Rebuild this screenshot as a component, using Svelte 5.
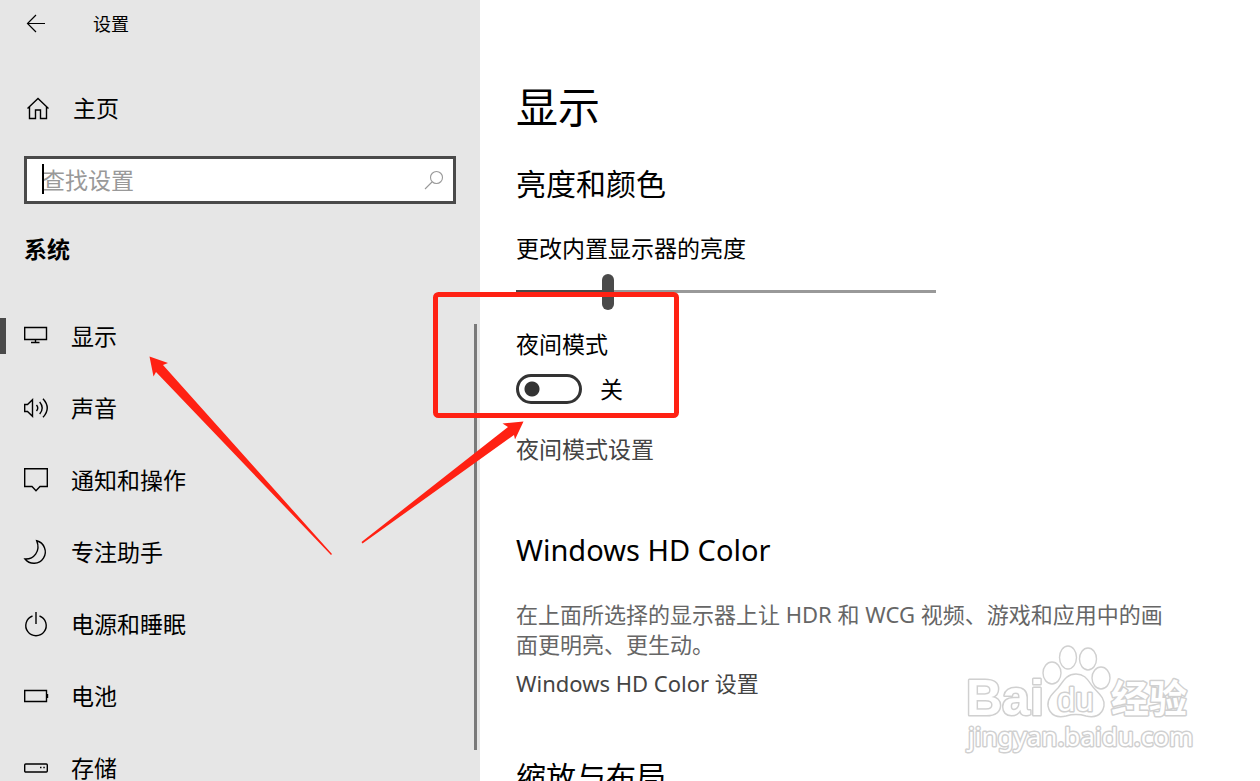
<script>
    let brightness = 21;
    let nightMode = false;
    let query = '';
    let current = 'display';

    const items = [
        { id: 'display', label: '显示' },
        { id: 'sound', label: '声音' },
        { id: 'notifications', label: '通知和操作' },
        { id: 'focus', label: '专注助手' },
        { id: 'power', label: '电源和睡眠' },
        { id: 'battery', label: '电池' },
        { id: 'storage', label: '存储' }
    ];
</script>

<div class="window">
    <aside class="sidebar">
        <header class="titlebar">
            <button class="back" type="button" aria-label="返回">
                <svg class="icon thin" viewBox="0 0 24 24">
                    <path d="M21 11.5H3.5M12 3L3.5 11.5L12 20" />
                </svg>
            </button>
            <span>设置</span>
        </header>

        <a class="home" href="#home">
            <svg class="icon" viewBox="0 0 24 24">
                <path d="M3.5 12.5L14 2.5L24.5 12.5M5.5 11V22.5H11.5V14H16.5V22.5H22.5V11" />
            </svg>
            <span>主页</span>
        </a>

        <div class="search">
            <input type="text" placeholder="查找设置" aria-label="查找设置" bind:value={query}>
            <svg class="icon search-icon" viewBox="0 0 24 24">
                <circle cx="15.5" cy="9.5" r="6" />
                <path d="M11 14L4 21" />
            </svg>
        </div>

        <h2 class="group">系统</h2>

        <nav>
            <ul>
                {#each items as item}
                    <li>
                        <a href="#{item.id}" class:active={current === item.id} on:click={() => (current = item.id)}>
                            <svg class="icon" viewBox="0 0 24 24">
                                {#if item.id === 'display'}
                                    <path d="M.7 3.5H22.5V15.5H.7ZM11.5 15.5V18.5M7 18.5H15.5" />
                                {:else if item.id === 'sound'}
                                    <path d="M.7 8.5H3.5L8.5 3.7V20.3L3.5 15.5H.7Z" />
                                    <path d="M12.5 9Q15 12 12.5 15M15.7 6Q20.7 12 15.7 18M19 2.7Q27.5 12 19 21.3" />
                                {:else if item.id === 'notifications'}
                                    <path d="M.7 .7H23.3V18.5H16L12 22.7L8 18.5H.7Z" />
                                {:else if item.id === 'focus'}
                                    <path d="M12.7 .8A11.4 11.4 0 1 1 1 19C9.5 19.5 17 11.5 12.7 .8Z" />
                                {:else if item.id === 'power'}
                                    <path d="M8.5 4A10.2 10.2 0 1 0 15.5 4M12 0V12" />
                                {:else if item.id === 'battery'}
                                    <path d="M.7 6.5H22.5V17.5H.7ZM23.5 10V14" />
                                {:else}
                                    <rect x=".7" y="8" width="22.6" height="8" rx="1" />
                                    <path d="M16 11.5H17.5M19.3 11.5H20.8" />
                                {/if}
                            </svg>
                            <span>{item.label}</span>
                        </a>
                    </li>
                {/each}
            </ul>
        </nav>
        <div class="scrollbar"></div>
    </aside>

    <main>
        <h1>显示</h1>

        <section>
            <h2>亮度和颜色</h2>
            <label class="field" for="brightness">更改内置显示器的亮度</label>
            <input
                id="brightness"
                class="slider"
                type="range"
                min="0"
                max="100"
                bind:value={brightness}
                style="--fill: {brightness}%"
            >
            <label class="field night" for="night">夜间模式</label>
            <div class="toggle">
                <input id="night" type="checkbox" role="switch" bind:checked={nightMode}>
                <span>{nightMode ? '开' : '关'}</span>
            </div>
            <a class="link night-link" href="#night-settings">夜间模式设置</a>
        </section>

        <section class="color">
            <h2>Windows HD Color</h2>
            <p>在上面所选择的显示器上让 HDR 和 WCG 视频、游戏和应用中的画面更明亮、更生动。</p>
            <a class="link" href="#hd-color">Windows HD Color 设置</a>
        </section>

        <section class="scale">
            <h2>缩放与布局</h2>
        </section>
    </main>

    <svg class="marks">
        <rect x="435.5" y="294.5" width="241" height="121" rx="3" />
        <path d="M149.5 356.5L168 363L163 365L332 554L331 555L156 372L153.5 376.5Z" />
        <path d="M523.5 421.5L502.5 423.5L508 427L361.5 542L362.5 543.5L514 435L515 439.5Z" />
    </svg>

    <svg class="watermark" viewBox="0 0 240 120">
        <text class="brand" x="6" y="74">Bai</text>
        <ellipse cx="92" cy="32" rx="9" ry="11" />
        <ellipse cx="108" cy="16.5" rx="8.5" ry="11.5" />
        <ellipse cx="128" cy="18" rx="8.5" ry="11" />
        <ellipse cx="141" cy="37" rx="9" ry="11" />
        <path d="M116 33C106 33 103 41 98 47C92 53 87 58 88 65C90 75 98 77 106 75C113 73 119 73 126 75C134 77 142 75 144 65C145 57 139 53 133 46C128 40 126 33 116 33Z" />
        <text class="du" x="97" y="70">du</text>
        <text class="cn" x="151" y="71">经验</text>
        <text class="url" x="8" y="105">jingyan.baidu.com</text>
    </svg>
</div>

<style>
    :global(body) {
        background: #fff;
        color: #000;
        font-family: "Noto Sans", "Noto Sans CJK SC", sans-serif;
    }

    .window {
        position: relative;
        display: flex;
        height: 100vh;
        overflow: hidden;
        font-size: 23px;
        line-height: 30px;
    }

    h1,
    h2,
    p,
    ul {
        margin: 0;
        padding: 0;
    }

    a {
        color: inherit;
        text-decoration: none;
    }

    .icon {
        flex: none;
        width: 24px;
        height: 24px;
        overflow: visible;
        fill: none;
        stroke: #000;
        stroke-width: 1.4;
    }

    .thin {
        stroke-width: 1.2;
    }

    .sidebar {
        position: relative;
        box-sizing: border-box;
        flex: 0 0 480px;
        background: #e6e6e6;
    }

    .titlebar {
        display: flex;
        align-items: center;
        gap: 45px;
        height: 48px;
        padding-left: 24px;
        font-size: 18px;
    }

    .back {
        display: flex;
        padding: 0;
        border: none;
        background: none;
    }

    .home {
        display: flex;
        align-items: center;
        gap: 25px;
        height: 48px;
        margin-top: 36px;
        padding-left: 24px;
    }

    .search {
        position: relative;
        margin: 24px 24px 0;
    }

    .search input {
        display: block;
        box-sizing: border-box;
        width: 100%;
        height: 48px;
        padding: 0 48px 0 15px;
        border: 3px solid #4a4a4a;
        border-radius: 0;
        outline: none;
        background: #fff;
        font: inherit;
    }

    .search input::placeholder {
        color: #999;
        opacity: 1;
    }

    /* text caret */
    .search::after {
        content: '';
        position: absolute;
        left: 18px;
        top: 8px;
        width: 2px;
        height: 30px;
        background: #000;
    }

    .search-icon {
        position: absolute;
        right: 11px;
        top: 12px;
        stroke: #999;
        stroke-width: 1.1;
    }

    .group {
        margin: 30px 24px 36px;
        font-size: 23px;
        font-weight: 700;
    }

    nav ul {
        list-style: none;
    }

    nav a {
        position: relative;
        display: flex;
        align-items: center;
        gap: 23px;
        height: 72px;
        padding-left: 24px;
    }

    nav a.active::before {
        content: '';
        position: absolute;
        left: 0;
        top: 18px;
        width: 6px;
        height: 36px;
        background: #4a4a4a;
    }

    .scrollbar {
        position: absolute;
        right: 3px;
        top: 324px;
        bottom: 31px;
        width: 3px;
        background: #7a7a7a;
    }

    main {
        flex: 1;
        min-width: 0;
        padding: 79px 84px 0 36px;
    }

    h1 {
        margin-bottom: 29px;
        font-size: 42px;
        font-weight: 400;
        line-height: 56px;
    }

    main h2 {
        font-size: 30px;
        font-weight: 400;
        line-height: 40px;
    }

    .field {
        display: block;
        margin-top: 29px;
    }

    .night {
        margin-top: 19px;
    }

    .slider {
        display: block;
        width: 420px;
        max-width: 100%;
        height: 36px;
        margin: 11px 0 0;
        appearance: none;
        background: linear-gradient(to right, #4a4a4a var(--fill), #999 var(--fill)) 0 16px / 100% 3px no-repeat;
    }

    .slider::-webkit-slider-thumb {
        appearance: none;
        width: 12px;
        height: 36px;
        border-radius: 6px;
        background: #4a4a4a;
    }

    .toggle {
        display: flex;
        align-items: center;
        gap: 18px;
        margin-top: 15px;
    }

    .toggle input {
        box-sizing: border-box;
        width: 66px;
        height: 30px;
        margin: 0;
        border: 3px solid #333;
        border-radius: 15px;
        appearance: none;
        background: radial-gradient(circle at 13px 12px, #333 7px, transparent 8px);
    }

    .toggle input:checked {
        background: radial-gradient(circle at 47px 12px, #333 7px, transparent 8px);
    }

    .link {
        display: block;
        color: #444;
    }

    .night-link {
        margin-top: 30px;
    }

    .color {
        margin-top: 66px;
    }

    .color h2 {
        font-size: 29px;
    }

    .color p {
        margin: 29px 0 9px;
        color: #666;
        font-size: 22px;
    }

    .color .link {
        font-size: 22px;
    }

    .scale {
        margin-top: 59px;
    }

    .marks {
        position: absolute;
        inset: 0;
        width: 100%;
        height: 100%;
        fill: #ff2113;
        pointer-events: none;
    }

    .marks rect {
        fill: none;
        stroke: #ff2113;
        stroke-width: 5;
    }

    .watermark {
        position: absolute;
        right: 60px;
        bottom: 20px;
        width: 240px;
        height: 120px;
        fill: #fff;
        stroke: #d0d0d0;
        stroke-width: 1.4;
        pointer-events: none;
    }

    .watermark text {
        paint-order: stroke;
        stroke-width: 3;
        stroke-linejoin: round;
    }

    .brand {
        font: 700 50px "Liberation Sans", sans-serif;
    }

    .du {
        font: 400 33px "Liberation Sans", sans-serif;
    }

    .cn {
        font: 700 38px "Noto Sans CJK SC", sans-serif;
    }

    .url {
        font: 400 26px "Noto Sans", sans-serif;
    }
</style>
